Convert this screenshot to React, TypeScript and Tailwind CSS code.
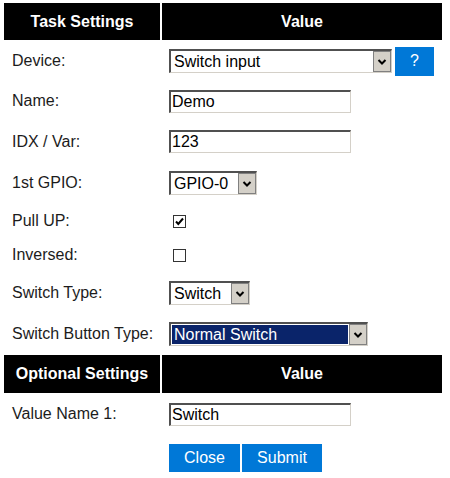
import type { ReactNode } from 'react';

const font = { fontFamily: '"Liberation Sans", Arial, sans-serif' };

function Chevron() {
  return (
    <svg width="10" height="8" viewBox="0 0 10 8" className="block">
      <polyline points="1.5,2 5,5.5 8.5,2" fill="none" stroke="#000" strokeWidth="2" />
    </svg>
  );
}

function Select({ text, width, active }: { text: string; width: string; active?: boolean }) {
  return (
    <div
      className={`flex h-[24px] ${width} border-t-2 border-l-2 border-t-[#505050] border-l-[#505050] border-r border-b border-r-[#d4d0c8] border-b-[#d4d0c8] bg-white`}
    >
      <div className="flex min-w-0 flex-1 items-center p-px">
        <span
          className={`flex h-full flex-1 items-center pl-[2px] text-[16px] leading-none ${
            active ? 'bg-[#0a246a] text-white' : 'text-black'
          }`}
        >
          {text}
        </span>
      </div>
      <div className="flex w-[18px] items-center justify-center border border-[#808080] bg-[#d4d0c8]">
        <Chevron />
      </div>
    </div>
  );
}

function TextInput({ value }: { value: string }) {
  return (
    <div className="flex h-[23px] w-[182px] items-center border-t-2 border-l-2 border-t-[#505050] border-l-[#505050] border-r border-b border-r-[#d4d0c8] border-b-[#d4d0c8] bg-white pl-px text-[16px] leading-none text-black">
      {value}
    </div>
  );
}

function Checkbox({ checked }: { checked?: boolean }) {
  return (
    <div className="ml-[4px] flex h-[13px] w-[13px] items-center justify-center border border-[#333] bg-white">
      {checked ? (
        <svg width="11" height="11" viewBox="0 0 11 11" className="block">
          <polyline points="2,5.5 4.3,8 9,2.5" fill="none" stroke="#000" strokeWidth="2" />
        </svg>
      ) : null}
    </div>
  );
}

function Header({ left }: { left: string }) {
  return (
    <div className="flex h-[38px] gap-[2px] text-[16px] font-bold text-white">
      <div className="flex w-[156px] items-center justify-center bg-black">{left}</div>
      <div className="flex w-[280px] items-center justify-center bg-black">Value</div>
    </div>
  );
}

function Row({ label, h, children }: { label?: string; h: string; children: ReactNode }) {
  return (
    <div className={`flex ${h} items-center`}>
      <div className="w-[158px] pl-[8px] text-[16px] text-[#1c1c1c]">{label}</div>
      <div className="flex items-center pl-[7px]">{children}</div>
    </div>
  );
}

export default function App() {
  return (
    <div className="flex w-[450px] flex-col gap-[2px] bg-white px-[4px] pt-[3px]" style={font}>
      <div className="flex h-[37px] gap-[2px] text-[16px] font-bold text-white">
        <div className="flex w-[156px] items-center justify-center bg-black">Task Settings</div>
        <div className="flex w-[280px] items-center justify-center bg-black">Value</div>
      </div>
      <Row label="Device:" h="h-[38px]">
        <Select text="Switch input" width="w-[223px]" />
        <button className="ml-[3px] h-[29px] w-[39px] bg-[#0078d7] text-[16px] text-white">?</button>
      </Row>
      <Row label="Name:" h="h-[38px]">
        <TextInput value="Demo" />
      </Row>
      <Row label="IDX / Var:" h="h-[39px]">
        <TextInput value="123" />
      </Row>
      <Row label="1st GPIO:" h="h-[40px]">
        <Select text="GPIO-0" width="w-[88px]" />
      </Row>
      <Row label="Pull UP:" h="h-[32px]">
        <Checkbox checked />
      </Row>
      <Row label="Inversed:" h="h-[32px]">
        <Checkbox />
      </Row>
      <Row label="Switch Type:" h="h-[40px]">
        <Select text="Switch" width="w-[81px]" />
      </Row>
      <Row label="Switch Button Type:" h="h-[38px]">
        <Select text="Normal Switch" width="w-[199px]" active />
      </Row>
      <Header left="Optional Settings" />
      <Row label="Value Name 1:" h="h-[38px]">
        <TextInput value="Switch" />
      </Row>
      <Row h="h-[46px]">
        <div className="flex gap-[2px]">
          <button className="h-[28px] w-[71px] bg-[#0078d7] text-[16px] text-white">Close</button>
          <button className="h-[28px] w-[80px] bg-[#0078d7] text-[16px] text-white">Submit</button>
        </div>
      </Row>
    </div>
  );
}
